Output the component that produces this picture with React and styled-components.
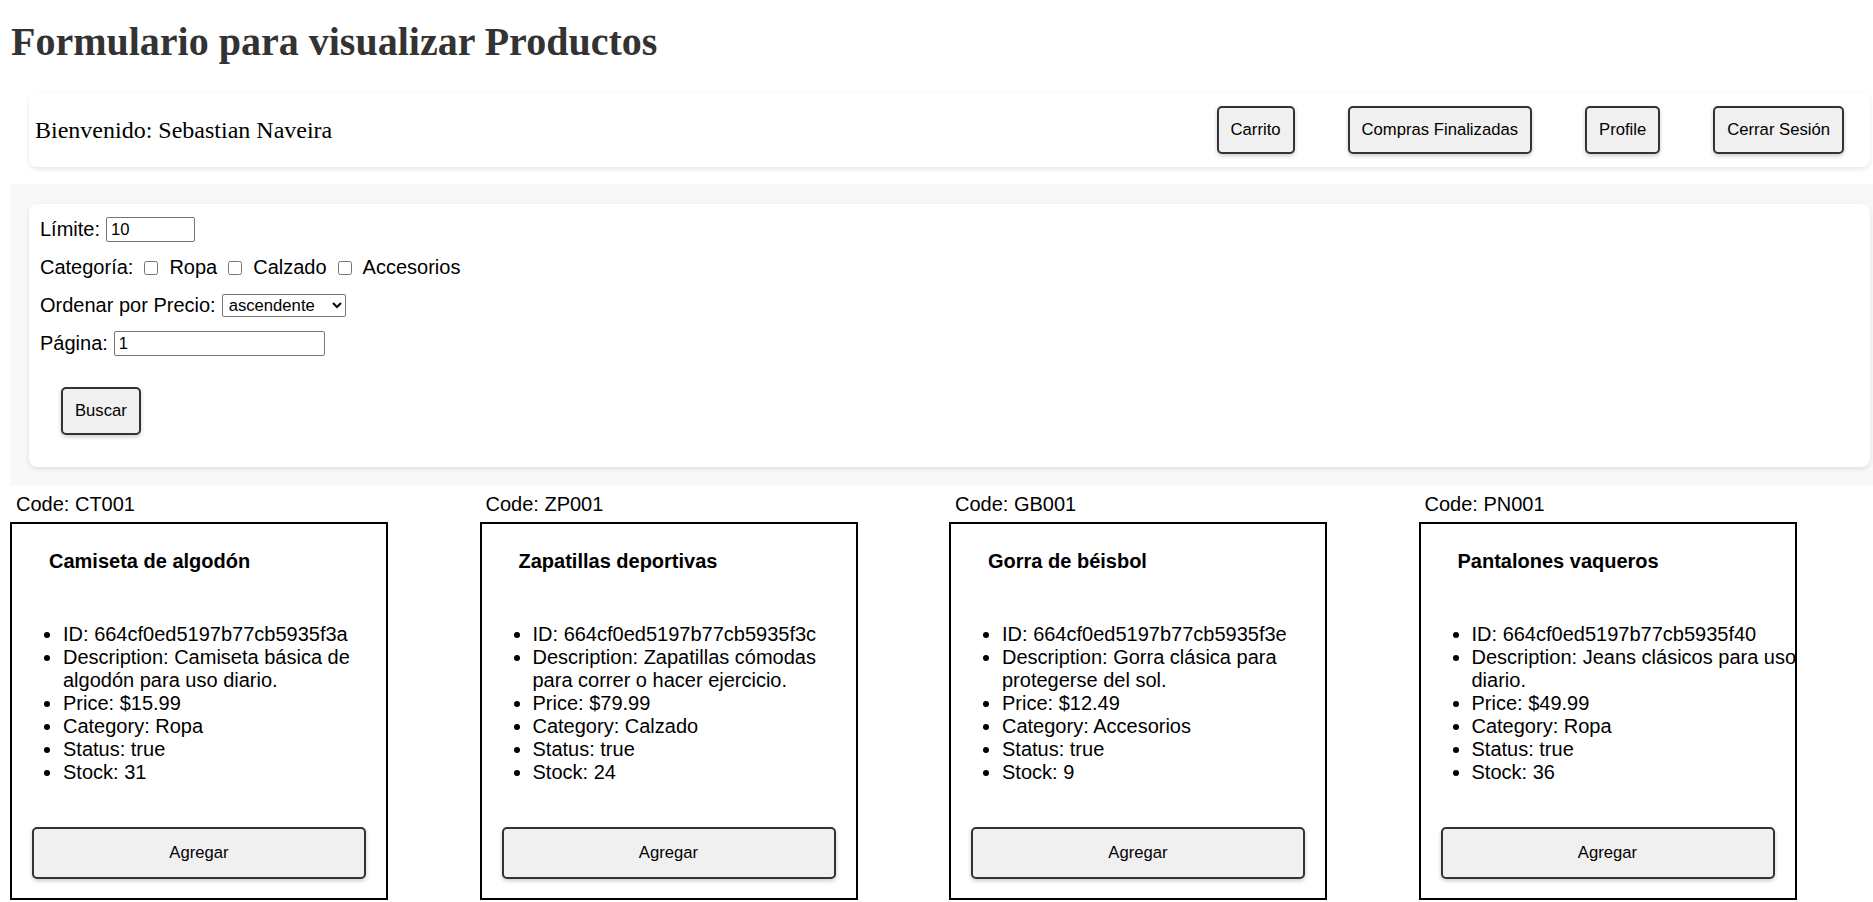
import React from 'react';
import styled, { createGlobalStyle } from 'styled-components';

const GlobalStyle = createGlobalStyle`
  html, body {
    margin: 0;
    padding: 0;
    background: #ffffff;
  }
  body {
    font-family: "Liberation Sans", Arial, sans-serif;
    color: #000;
    overflow: hidden;
  }
  *, *::before, *::after {
    box-sizing: border-box;
  }
`;

const Page = styled.div`
  padding-left: 10px;
`;

const Title = styled.h1`
  margin: 0;
  padding: 18px 0 0 1px;
  font-family: "Liberation Serif", "Times New Roman", serif;
  font-size: 40px;
  line-height: 47px;
  font-weight: 700;
  color: #333;
`;

const HeaderCard = styled.header`
  margin: 28px 3px 0 19px;
  height: 74px;
  display: flex;
  align-items: center;
  justify-content: space-between;
  padding: 0 26px 0 6px;
  background: #fff;
  border-radius: 8px;
  box-shadow: 0 2px 5px rgba(0, 0, 0, 0.1);
`;

const Welcome = styled.span`
  font-family: "Liberation Serif", "Times New Roman", serif;
  font-size: 24px;
  color: #000;
`;

const NavButtons = styled.nav`
  display: flex;
  align-items: center;
  gap: 53px;
`;

const ActionButton = styled.button`
  font-family: "Liberation Sans", Arial, sans-serif;
  font-size: 16.67px;
  line-height: normal;
  padding: ${(p) => (p.$tall ? '14px' : '12px')} 12px;
  border: 2px solid #333;
  border-radius: 5px;
  background: #f0f0f0;
  color: #000;
  box-shadow: 0 2px 4px rgba(0, 0, 0, 0.2);
  cursor: pointer;
`;

const FilterSection = styled.section`
  margin: 17px 0 0 10px;
  background: #f8f8f8;
  padding: 20px 3px 19px 19px;
`;

const FilterCard = styled.form`
  background: #fff;
  border-radius: 8px;
  box-shadow: 0 2px 5px rgba(0, 0, 0, 0.1);
  padding: 12px 0 32px 11px;
  display: flex;
  flex-direction: column;
  align-items: flex-start;
  gap: 11px;
`;

const FieldRow = styled.div`
  display: flex;
  align-items: center;
  gap: 6px;
  height: 27px;
  font-size: 20px;
  line-height: 23px;
`;

const TextInput = styled.input`
  width: ${(p) => p.$width}px;
  height: 25px;
  font-family: "Liberation Sans", Arial, sans-serif;
  font-size: 16.67px;
  padding: 1px 4px;
  border: 1px solid #767676;
  border-radius: 2px;
  color: #000;
  background: #fff;
`;

const SelectBox = styled.select`
  width: 124px;
  height: 23px;
  font-family: "Liberation Sans", Arial, sans-serif;
  font-size: 16.67px;
  padding: 0 2px;
  border: 1px solid #767676;
  border-radius: 2px;
  color: #000;
  background: #fff;
`;

const CheckOption = styled.label`
  display: inline-flex;
  align-items: center;
`;

const CheckBox = styled.input`
  width: 14px;
  height: 14px;
  margin: 0 11px 0 5px;
`;

const SearchRow = styled.div`
  margin-top: 19px;
  padding-left: 21px;
`;

const ProductsGrid = styled.div`
  display: grid;
  grid-template-columns: repeat(4, 378px);
  column-gap: 91.5px;
  padding-top: 7px;
`;

const ProductItem = styled.div`
  display: flex;
  flex-direction: column;
`;

const CodeLabel = styled.div`
  padding-left: 6px;
  font-size: 20px;
  line-height: 23px;
  margin-bottom: 6px;
`;

const ProductCard = styled.article`
  width: 378px;
  height: 378px;
  border: 2px solid #000;
  display: flex;
  flex-direction: column;
`;

const CardTitle = styled.h3`
  margin: 26px 0 0 37px;
  font-size: 20px;
  line-height: 23px;
  font-weight: 700;
`;

const DetailList = styled.ul`
  margin: 50px -3px 0 11px;
  padding-left: 40px;
  font-size: 20px;
  line-height: 23px;
`;

const AddButton = styled(ActionButton)`
  width: calc(100% - 40px);
  margin: 43px auto 0;
`;

const products = [
  {
    code: 'CT001',
    title: 'Camiseta de algodón',
    id: '664cf0ed5197b77cb5935f3a',
    description: 'Camiseta básica de algodón para uso diario.',
    price: '15.99',
    category: 'Ropa',
    status: 'true',
    stock: 31,
  },
  {
    code: 'ZP001',
    title: 'Zapatillas deportivas',
    id: '664cf0ed5197b77cb5935f3c',
    description: 'Zapatillas cómodas para correr o hacer ejercicio.',
    price: '79.99',
    category: 'Calzado',
    status: 'true',
    stock: 24,
  },
  {
    code: 'GB001',
    title: 'Gorra de béisbol',
    id: '664cf0ed5197b77cb5935f3e',
    description: 'Gorra clásica para protegerse del sol.',
    price: '12.49',
    category: 'Accesorios',
    status: 'true',
    stock: 9,
  },
  {
    code: 'PN001',
    title: 'Pantalones vaqueros',
    id: '664cf0ed5197b77cb5935f40',
    description: 'Jeans clásicos para uso diario.',
    price: '49.99',
    category: 'Ropa',
    status: 'true',
    stock: 36,
  },
];

export default function App() {
  return (
    <>
      <GlobalStyle />
      <Page>
        <Title>Formulario para visualizar Productos</Title>
        <HeaderCard>
          <Welcome>Bienvenido: Sebastian Naveira</Welcome>
          <NavButtons>
            <ActionButton type="button">Carrito</ActionButton>
            <ActionButton type="button">Compras Finalizadas</ActionButton>
            <ActionButton type="button">Profile</ActionButton>
            <ActionButton type="button">Cerrar Sesión</ActionButton>
          </NavButtons>
        </HeaderCard>
      </Page>

      <FilterSection>
        <FilterCard onSubmit={(e) => e.preventDefault()}>
          <FieldRow>
            <span>Límite:</span>
            <TextInput $width={89} type="text" defaultValue="10" />
          </FieldRow>
          <FieldRow>
            <span>Categoría:</span>
            <CheckOption>
              <CheckBox type="checkbox" />
              Ropa
            </CheckOption>
            <CheckOption>
              <CheckBox type="checkbox" />
              Calzado
            </CheckOption>
            <CheckOption>
              <CheckBox type="checkbox" />
              Accesorios
            </CheckOption>
          </FieldRow>
          <FieldRow>
            <span>Ordenar por Precio:</span>
            <SelectBox defaultValue="asc">
              <option value="asc">ascendente</option>
              <option value="desc">descendente</option>
            </SelectBox>
          </FieldRow>
          <FieldRow>
            <span>Página:</span>
            <TextInput $width={211} type="text" defaultValue="1" />
          </FieldRow>
          <SearchRow>
            <ActionButton type="submit">Buscar</ActionButton>
          </SearchRow>
        </FilterCard>
      </FilterSection>

      <Page>
        <ProductsGrid>
          {products.map((p) => (
            <ProductItem key={p.code}>
              <CodeLabel>Code: {p.code}</CodeLabel>
              <ProductCard>
                <CardTitle>{p.title}</CardTitle>
                <DetailList>
                  <li>ID: {p.id}</li>
                  <li>Description: {p.description}</li>
                  <li>Price: ${p.price}</li>
                  <li>Category: {p.category}</li>
                  <li>Status: {p.status}</li>
                  <li>Stock: {p.stock}</li>
                </DetailList>
                <AddButton type="button" $tall>
                  Agregar
                </AddButton>
              </ProductCard>
            </ProductItem>
          ))}
        </ProductsGrid>
      </Page>
    </>
  );
}
